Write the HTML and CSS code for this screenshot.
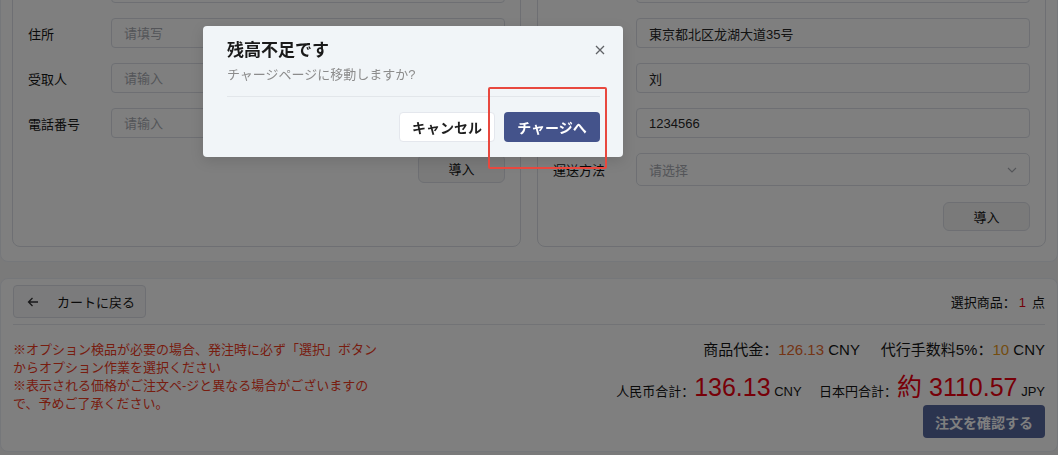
FILE: index.html
```html
<!DOCTYPE html>
<html>
<head>
    <meta charset="utf-8">
    <link rel="stylesheet" href="styles.css">
</head>
<body>
    <div class="page">
        <section class="address">
            <div class="card">
                <div class="row"><label></label><input class="field"></div>
                <div class="row"><label>住所</label><input class="field" placeholder="请填写"></div>
                <div class="row"><label>受取人</label><input class="field" placeholder="请输入"></div>
                <div class="row"><label>電話番号</label><input class="field" placeholder="请输入"></div>
                <div class="actions"><button class="import">導入</button></div>
            </div>
            <div class="card">
                <div class="row"><label></label><input class="field"></div>
                <div class="row"><label>住所</label><input class="field" value="東京都北区龙湖大道35号"></div>
                <div class="row"><label>受取人</label><input class="field" value="刘"></div>
                <div class="row"><label>電話番号</label><input class="field" value="1234566"></div>
                <div class="row">
                    <label>運送方法</label>
                    <div class="select">
                        <span>请选择</span>
                        <svg width="10" height="6" viewBox="0 0 10 6"><path d="M1 1l4 4 4-4" fill="none" stroke="#a8abb2" stroke-width="1.1"/></svg>
                    </div>
                </div>
                <div class="actions"><button class="import">導入</button></div>
            </div>
        </section>

        <section class="summary">
            <div class="summary-top">
                <button class="back">
                    <svg width="12" height="12" viewBox="0 0 12 12"><path d="M11 6H1.5M5.5 2L1.5 6l4 4" fill="none" stroke="#303133" stroke-width="1.3"/></svg>
                    <span>カートに戻る</span>
                </button>
                <div class="picked">選択商品：<span class="count">1</span>点</div>
            </div>
            <div class="summary-body">
                <div class="notice">
                    <p>※オプション検品が必要の場合、発注時に必ず「選択」ボタンからオプション作業を選択ください</p>
                    <p>※表示される価格がご注文ペ-ジと異なる場合がございますので、予めご了承ください。</p>
                </div>
                <div class="totals">
                    <div class="fees">
                        商品代金：<span class="goods">126.13</span> CNY
                        <span class="fee-label">代行手数料5%：<span class="fee">10</span> CNY</span>
                    </div>
                    <div class="total">
                        人民币合計：<span class="big">136.13</span> CNY
                        <span class="jpy-label">日本円合計：<span class="big">約 3110.57</span> JPY</span>
                    </div>
                    <button class="confirm">注文を確認する</button>
                </div>
            </div>
        </section>
    </div>

    <div class="mask"></div>

    <div class="dialog">
        <button class="close">
            <svg width="10" height="10" viewBox="0 0 10 10"><path d="M1 1l8 8M9 1L1 9" fill="none" stroke="#606266" stroke-width="1.3"/></svg>
        </button>
        <div class="dialog-title">残高不足です</div>
        <div class="dialog-text">チャージページに移動しますか?</div>
        <div class="dialog-foot">
            <button class="cancel">キャンセル</button>
            <button class="primary">チャージへ</button>
        </div>
    </div>

    <div class="mark"></div>
</body>
</html>
```

FILE: styles.css
```css
* {
    box-sizing: border-box;
}
body {
    margin: 0;
    height: 455px;
    overflow: hidden;
    background-color: #f4f4f5;
    color: #303133;
    font-family: "Liberation Sans", "Noto Sans CJK SC", sans-serif;
    font-size: 13px;
}
button {
    font-family: inherit;
    cursor: pointer;
}

/* address cards */
.address {
    display: flex;
    gap: 16px;
    margin-top: -55px;
    padding: 11px 11px 14px;
    background-color: #fff;
    border: 1px solid #ebeef5;
    border-radius: 8px;
}
.card {
    flex: 1;
    display: flex;
    flex-direction: column;
    gap: 15px;
    padding: 15px 15px 15px;
    border: 1px solid #dcdfe6;
    border-radius: 8px;
}
.row {
    display: flex;
    align-items: center;
}
.row label {
    flex: none;
    width: 83px;
    color: #141414;
}
.field {
    flex: 1;
    min-width: 0;
    height: 30px;
    padding: 0 12px;
    border: 1px solid #dcdfe6;
    border-radius: 4px;
    background-color: #fff;
    color: #262626;
    font: inherit;
}
.field::placeholder {
    color: #a8abb2;
}
.select {
    flex: 1;
    height: 33px;
    display: flex;
    align-items: center;
    justify-content: space-between;
    padding: 0 12px;
    border: 1px solid #dcdfe6;
    border-radius: 5px;
    color: #a8abb2;
}
.actions {
    display: flex;
    justify-content: flex-end;
    padding-top: 1px;
}
.import {
    width: 87px;
    height: 29px;
    border: 1px solid #dcdfe6;
    border-radius: 6px;
    background-color: #f4f4f5;
    color: #141414;
    font-size: 13px;
}

/* order summary */
.summary {
    margin-top: 16px;
    padding: 6px 12px 13px;
    background-color: #fff;
    border: 1px solid #ebeef5;
    border-radius: 8px;
}
.summary-top {
    display: flex;
    align-items: center;
    justify-content: space-between;
    padding-bottom: 6px;
    border-bottom: 1px solid #e4e7ed;
}
.back {
    display: flex;
    align-items: center;
    gap: 18px;
    width: 133px;
    height: 33px;
    padding: 0 0 0 13px;
    border: 1px solid #dcdfe6;
    border-radius: 4px;
    background-color: #f7f7f8;
    color: #141414;
    font-size: 13px;
}
.picked {
    color: #141414;
}
.count {
    margin: 0 6px 0 3px;
    color: #e60012;
}
.summary-body {
    display: flex;
    justify-content: space-between;
    padding-top: 16px;
}
.notice {
    width: 366px;
    color: #f03a1e;
    line-height: 18px;
}
.notice p {
    margin: 0;
}
.totals {
    display: flex;
    flex-direction: column;
    align-items: flex-end;
    color: #141414;
}
.fees {
    font-size: 15px;
    line-height: 18px;
}
.goods {
    color: #e8682a;
}
.fee-label {
    margin-left: 17px;
}
.fee {
    color: #e89a1e;
}
.total {
    margin-top: 15px;
    line-height: 26px;
}
.big {
    font-size: 25px;
    color: #ee0010;
}
.jpy-label {
    margin-left: 14px;
}
.confirm {
    width: 122px;
    height: 33px;
    border: none;
    border-radius: 4px;
    background-color: #56689f;
    color: #fff;
    font-size: 14px;
    font-weight: 600;
}

/* dialog */
.mask {
    position: fixed;
    inset: 0;
    background-color: rgba(0, 0, 0, 0.5);
}
.dialog {
    position: absolute;
    left: 203px;
    top: 26px;
    width: 420px;
    padding: 13px 23px 15px 24px;
    background-color: #f1f5f8;
    border-radius: 4px;
    box-shadow: 0 4px 14px rgba(0, 0, 0, 0.12);
}
.close {
    position: absolute;
    top: 19px;
    right: 18px;
    width: 10px;
    height: 10px;
    padding: 0;
    border: none;
    background: none;
    display: flex;
}
.dialog-title {
    font-size: 17px;
    font-weight: 600;
    line-height: 24px;
    color: #1a1a1a;
}
.dialog-text {
    margin-top: 3px;
    padding-bottom: 12px;
    border-bottom: 1px solid #e2e6ea;
    color: #8c8c8c;
    line-height: 18px;
}
.dialog-foot {
    display: flex;
    justify-content: flex-end;
    gap: 9px;
    margin-top: 15px;
}
.dialog-foot button {
    width: 96px;
    height: 30px;
    border-radius: 4px;
    font-size: 14px;
    font-weight: 600;
}
.cancel {
    border: 1px solid #e4e7ed;
    background-color: #fff;
    color: #1f1f1f;
}
.primary {
    border: none;
    background-color: #44538b;
    color: #fff;
}

/* red outline around the charge button */
.mark {
    position: absolute;
    left: 488px;
    top: 87px;
    width: 119px;
    height: 82px;
    border: 2.5px solid #e8483e;
    border-radius: 2px;
}
```
